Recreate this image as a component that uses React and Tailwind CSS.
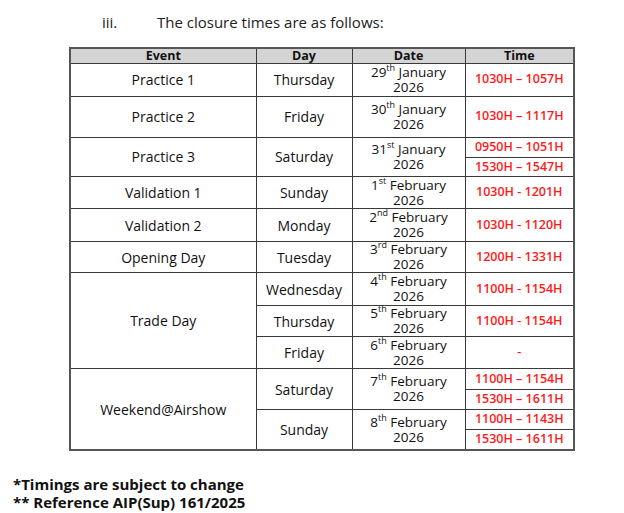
import React from "react";

const font = { fontFamily: '"Open Sans", "Noto Sans", sans-serif' };

function Date2({ d, sup, m }) {
  return (
    <div className="leading-[15px] text-[13.5px]">
      <div>
        {d}
        <span className="relative top-[-6px] text-[9px] leading-none">{sup}</span> {m}
      </div>
      <div>2026</div>
    </div>
  );
}

const td = "border border-[#3a3a3a] text-center align-middle p-0 text-[14px] text-[#111]";
const tt = "border border-[#3a3a3a] text-center align-middle p-0 text-[12.5px] text-[#ff1a1a] font-semibold";

export default function App() {
  return (
    <div className="w-[624px] h-[513px] bg-white relative" style={font}>
      <div className="flex pt-[11px] h-[47px] text-[15px] text-[#222]">
        <span className="ml-[102px] w-[55px]">iii.</span>
        <span>The closure times are as follows:</span>
      </div>
      <table className="ml-[69px] w-[504px] table-fixed border-collapse border-2 border-[#555]">
        <colgroup>
          <col className="w-[186px]" />
          <col className="w-[96px]" />
          <col className="w-[113px]" />
          <col className="w-[109px]" />
        </colgroup>
        <thead>
          <tr className="h-[15px] bg-[#d4d4d4]">
            {["Event", "Day", "Date", "Time"].map((h) => (
              <th key={h} className="border border-[#3a3a3a] text-[12.5px] font-bold leading-[13px] p-0 text-[#111]">
                {h}
              </th>
            ))}
          </tr>
        </thead>
        <tbody>
          <tr className="h-[33px]">
            <td className={td}>Practice 1</td>
            <td className={td}>Thursday</td>
            <td className={td}><Date2 d="29" sup="th" m="January" /></td>
            <td className={tt}>1030H – 1057H</td>
          </tr>
          <tr className="h-[41px]">
            <td className={td}>Practice 2</td>
            <td className={td}>Friday</td>
            <td className={td}><Date2 d="30" sup="th" m="January" /></td>
            <td className={tt}>1030H – 1117H</td>
          </tr>
          <tr className="h-[20px]">
            <td className={td} rowSpan={2}>Practice 3</td>
            <td className={td} rowSpan={2}>Saturday</td>
            <td className={td} rowSpan={2}><Date2 d="31" sup="st" m="January" /></td>
            <td className={tt}>0950H – 1051H</td>
          </tr>
          <tr className="h-[19px]">
            <td className={tt}>1530H – 1547H</td>
          </tr>
          <tr className="h-[32px]">
            <td className={td}>Validation 1</td>
            <td className={td}>Sunday</td>
            <td className={td}><Date2 d="1" sup="st" m="February" /></td>
            <td className={tt}>1030H - 1201H</td>
          </tr>
          <tr className="h-[33px]">
            <td className={td}>Validation 2</td>
            <td className={td}>Monday</td>
            <td className={td}><Date2 d="2" sup="nd" m="February" /></td>
            <td className={tt}>1030H - 1120H</td>
          </tr>
          <tr className="h-[31px]">
            <td className={td}>Opening Day</td>
            <td className={td}>Tuesday</td>
            <td className={td}><Date2 d="3" sup="rd" m="February" /></td>
            <td className={tt}>1200H - 1331H</td>
          </tr>
          <tr className="h-[33px]">
            <td className={td} rowSpan={3}>Trade Day</td>
            <td className={td}>Wednesday</td>
            <td className={td}><Date2 d="4" sup="th" m="February" /></td>
            <td className={tt}>1100H - 1154H</td>
          </tr>
          <tr className="h-[31px]">
            <td className={td}>Thursday</td>
            <td className={td}><Date2 d="5" sup="th" m="February" /></td>
            <td className={tt}>1100H - 1154H</td>
          </tr>
          <tr className="h-[32px]">
            <td className={td}>Friday</td>
            <td className={td}><Date2 d="6" sup="th" m="February" /></td>
            <td className={tt}>-</td>
          </tr>
          <tr className="h-[21px]">
            <td className={td} rowSpan={4}>Weekend@Airshow</td>
            <td className={td} rowSpan={2}>Saturday</td>
            <td className={td} rowSpan={2}><Date2 d="7" sup="th" m="February" /></td>
            <td className={tt}>1100H – 1154H</td>
          </tr>
          <tr className="h-[20px]">
            <td className={tt}>1530H – 1611H</td>
          </tr>
          <tr className="h-[20px]">
            <td className={td} rowSpan={2}>Sunday</td>
            <td className={td} rowSpan={2}><Date2 d="8" sup="th" m="February" /></td>
            <td className={tt}>1100H – 1143H</td>
          </tr>
          <tr className="h-[20px]">
            <td className={tt}>1530H – 1611H</td>
          </tr>
        </tbody>
      </table>
      <div className="mt-[24px] ml-[13px] text-[15px] font-bold leading-[18px] text-[#111]">
        <div>*Timings are subject to change</div>
        <div>** Reference AIP(Sup) 161/2025</div>
      </div>
    </div>
  );
}
